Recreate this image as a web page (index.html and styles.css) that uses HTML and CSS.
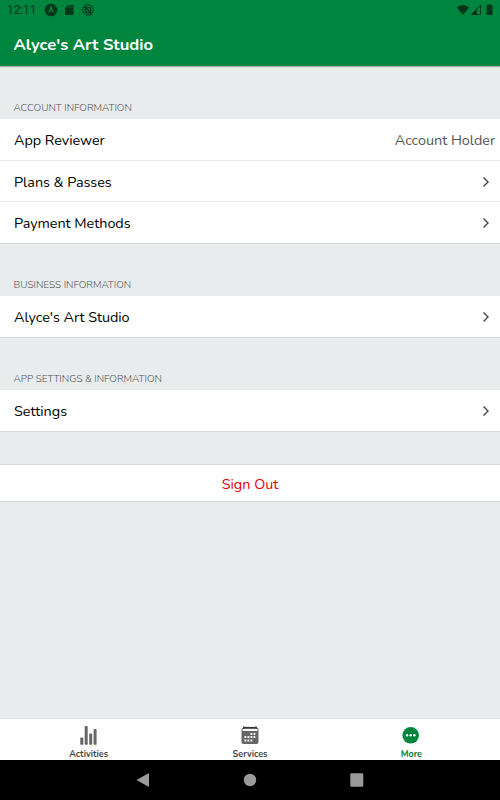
FILE: index.html
```html
<!DOCTYPE html>
<html lang="en">
<head>
  <meta charset="UTF-8">
  <meta name="viewport" content="width=device-width, initial-scale=1.0">
  <title>Alyce's Art Studio</title>
  <link rel="stylesheet" href="styles.css">
</head>
<body>
  <header>
    <div class="status-bar">
      <span class="time">12:11</span>
      <svg class="status-left" width="50" height="14" viewBox="0 0 50 14">
        <circle cx="7" cy="7" r="6.3" fill="#04361b"/>
        <path d="M4.6 9.2Q6.2 7.5 7 4.5 7.8 7.5 9.4 9.2" fill="none" stroke="#00853e" stroke-width="1.4"/>
        <path d="M24 2h5.5v10h-8.5V5z" fill="#04361b"/>
        <path d="M24 3v2M26 3v2M28 3v2" stroke="#00853e" stroke-width=".5"/>
        <circle cx="44" cy="7" r="5.3" fill="none" stroke="#04361b" stroke-width="1"/>
        <circle cx="44" cy="7" r="2.7" fill="none" stroke="#04361b" stroke-width="1.3"/>
        <path d="m40 3 8 8" stroke="#04361b" stroke-width="1.3"/>
      </svg>
      <svg class="status-right" width="40" height="12" viewBox="0 0 40 12">
        <path d="M.8 3.5Q7 -1.5 13.2 3.5L7 11z" fill="#04361b"/>
        <path d="M24.5 1.2v9.3h-9z" fill="none" stroke="#04361b" stroke-width="1"/>
        <path d="M21 4.7v6h-6z" fill="#04361b"/>
        <path d="M31 1h2V0h2v1h1.5v10h-6V1z" fill="#04361b"/>
      </svg>
    </div>
    <h1>Alyce's Art Studio</h1>
  </header>

  <main>
    <h2>Account Information</h2>
    <div class="group">
      <div class="row"><span>App Reviewer</span><span class="value">Account Holder</span></div>
      <div class="row"><span>Plans &amp; Passes</span><svg class="chevron" viewBox="0 0 8 12"><path d="m1.5 1.5 4.5 4.5-4.5 4.5"/></svg></div>
      <div class="row"><span>Payment Methods</span><svg class="chevron" viewBox="0 0 8 12"><path d="m1.5 1.5 4.5 4.5-4.5 4.5"/></svg></div>
    </div>

    <h2>Business Information</h2>
    <div class="group">
      <div class="row"><span>Alyce's Art Studio</span><svg class="chevron" viewBox="0 0 8 12"><path d="m1.5 1.5 4.5 4.5-4.5 4.5"/></svg></div>
    </div>

    <h2>App Settings &amp; Information</h2>
    <div class="group">
      <div class="row"><span>Settings</span><svg class="chevron" viewBox="0 0 8 12"><path d="m1.5 1.5 4.5 4.5-4.5 4.5"/></svg></div>
    </div>

    <div class="sign-out">Sign Out</div>
  </main>

  <nav class="tabs">
    <div class="tab">
      <svg width="20" height="20" viewBox="0 0 20 20" fill="#666">
        <rect x="1.3" y="12.5" width="3" height="7.3" rx=".8"/>
        <rect x="5.7" y="1" width="3" height="18.8" rx=".8"/>
        <rect x="10.2" y="8.5" width="3" height="11.3" rx=".8"/>
        <rect x="14.6" y="4" width="3" height="15.8" rx=".8"/>
      </svg>
      <span>Activities</span>
    </div>
    <div class="tab">
      <svg width="20" height="20" viewBox="0 0 20 20">
        <rect x="1.5" y="2.5" width="17" height="16.5" rx="2" fill="#666"/>
        <path d="M2.5 4h15v2h-15z" fill="#fff"/>
        <path d="M3 2.5h14" stroke="#333" stroke-width="1.2"/>
        <path d="M4 1.5v2M16 1.5v2" stroke="#444" stroke-width="1.5"/>
        <path d="M10.5 9h6M7.5 12h9M4.5 12h2M4.5 15.5h9" stroke="#fff" stroke-width="1.8" stroke-dasharray="1.8 1.2"/>
      </svg>
      <span>Services</span>
    </div>
    <div class="tab active">
      <svg width="20" height="20" viewBox="0 0 20 20">
        <circle cx="9.7" cy="10.3" r="8.3" fill="#00853e"/>
        <g fill="#fff"><circle cx="6" cy="10.3" r="1.2"/><circle cx="9.7" cy="10.3" r="1.2"/><circle cx="13.4" cy="10.3" r="1.2"/></g>
      </svg>
      <span>More</span>
    </div>
  </nav>

  <footer>
    <svg width="14" height="14" viewBox="0 0 14 14"><path d="M.5 7 12 .5q1-.4 1 .5v12q0 .9-1 .5z"/></svg>
    <svg width="14" height="14" viewBox="0 0 14 14"><circle cx="7" cy="7" r="6.2"/></svg>
    <svg width="14" height="14" viewBox="0 0 14 14"><rect x=".3" y=".3" width="13" height="13.4" rx="1.2"/></svg>
  </footer>
</body>
</html>
```

FILE: styles.css
```css
* {
  box-sizing: border-box;
}

body {
  margin: 0;
  height: 100vh;
  display: flex;
  flex-direction: column;
  overflow: hidden;
  font-family: Nunito, Lato, sans-serif;
  background: #e8ecec;
  color: #000;
}

header {
  height: 66px;
  background: #00853e;
  box-shadow: 0 1px 1px rgba(0, 0, 0, 0.3);
}

.status-bar {
  height: 20px;
  padding: 0 4px 0 7px;
  display: flex;
  align-items: center;
  color: #04361b;
}

.time {
  width: 37px;
  font: 12px/20px Roboto, sans-serif;
  letter-spacing: -0.1px;
}

.status-right {
  margin-left: auto;
}

h1 {
  margin: 0;
  padding-left: 13.5px;
  font-size: 16.6px;
  line-height: 50px;
  font-weight: 700;
  color: #fff;
}

main {
  flex: 1;
}

h2 {
  margin: 0;
  height: 52px;
  padding: 34px 0 0 13.5px;
  font-size: 10px;
  line-height: 14px;
  font-weight: 300;
  text-transform: uppercase;
  white-space: nowrap;
  color: #555;
}

main h2:first-child {
  height: 53px;
  padding-top: 35px;
}

.group {
  background: #fff;
  border-bottom: 1px solid #d7dada;
}

.row {
  height: 41px;
  padding: 1px 5px 0 14px;
  display: flex;
  align-items: center;
  justify-content: space-between;
  font-size: 14.4px;
  line-height: 20px;
  letter-spacing: -0.04px;
}

.row + .row {
  border-top: 1px solid #e8eaea;
}

.row + .row + .row {
  height: 42px;
}

.value {
  color: #555;
}

.chevron {
  width: 8px;
  height: 12px;
  margin-right: 5px;
  fill: none;
  stroke: #444;
  stroke-width: 1.4;
}

.sign-out {
  height: 38px;
  margin-top: 32px;
  border-top: 1px solid #d7dada;
  border-bottom: 1px solid #d7dada;
  background: #fff;
  color: #e10000;
  font-size: 14.4px;
  line-height: 38px;
  text-align: center;
}

.tabs {
  height: 42px;
  padding: 6px 8px 0;
  display: flex;
  background: #fff;
  border-top: 1px solid #dfe2e2;
}

.tab {
  flex: 1;
  display: flex;
  flex-direction: column;
  align-items: center;
  font-size: 9px;
  line-height: 18px;
  font-weight: 700;
  color: #444;
}

.tab svg {
  flex-shrink: 0;
}

.active {
  color: #087d3b;
}

footer {
  height: 40px;
  background: #000;
  display: flex;
  align-items: center;
  justify-content: center;
  gap: 93px;
  fill: #9a9a9a;
}
```
